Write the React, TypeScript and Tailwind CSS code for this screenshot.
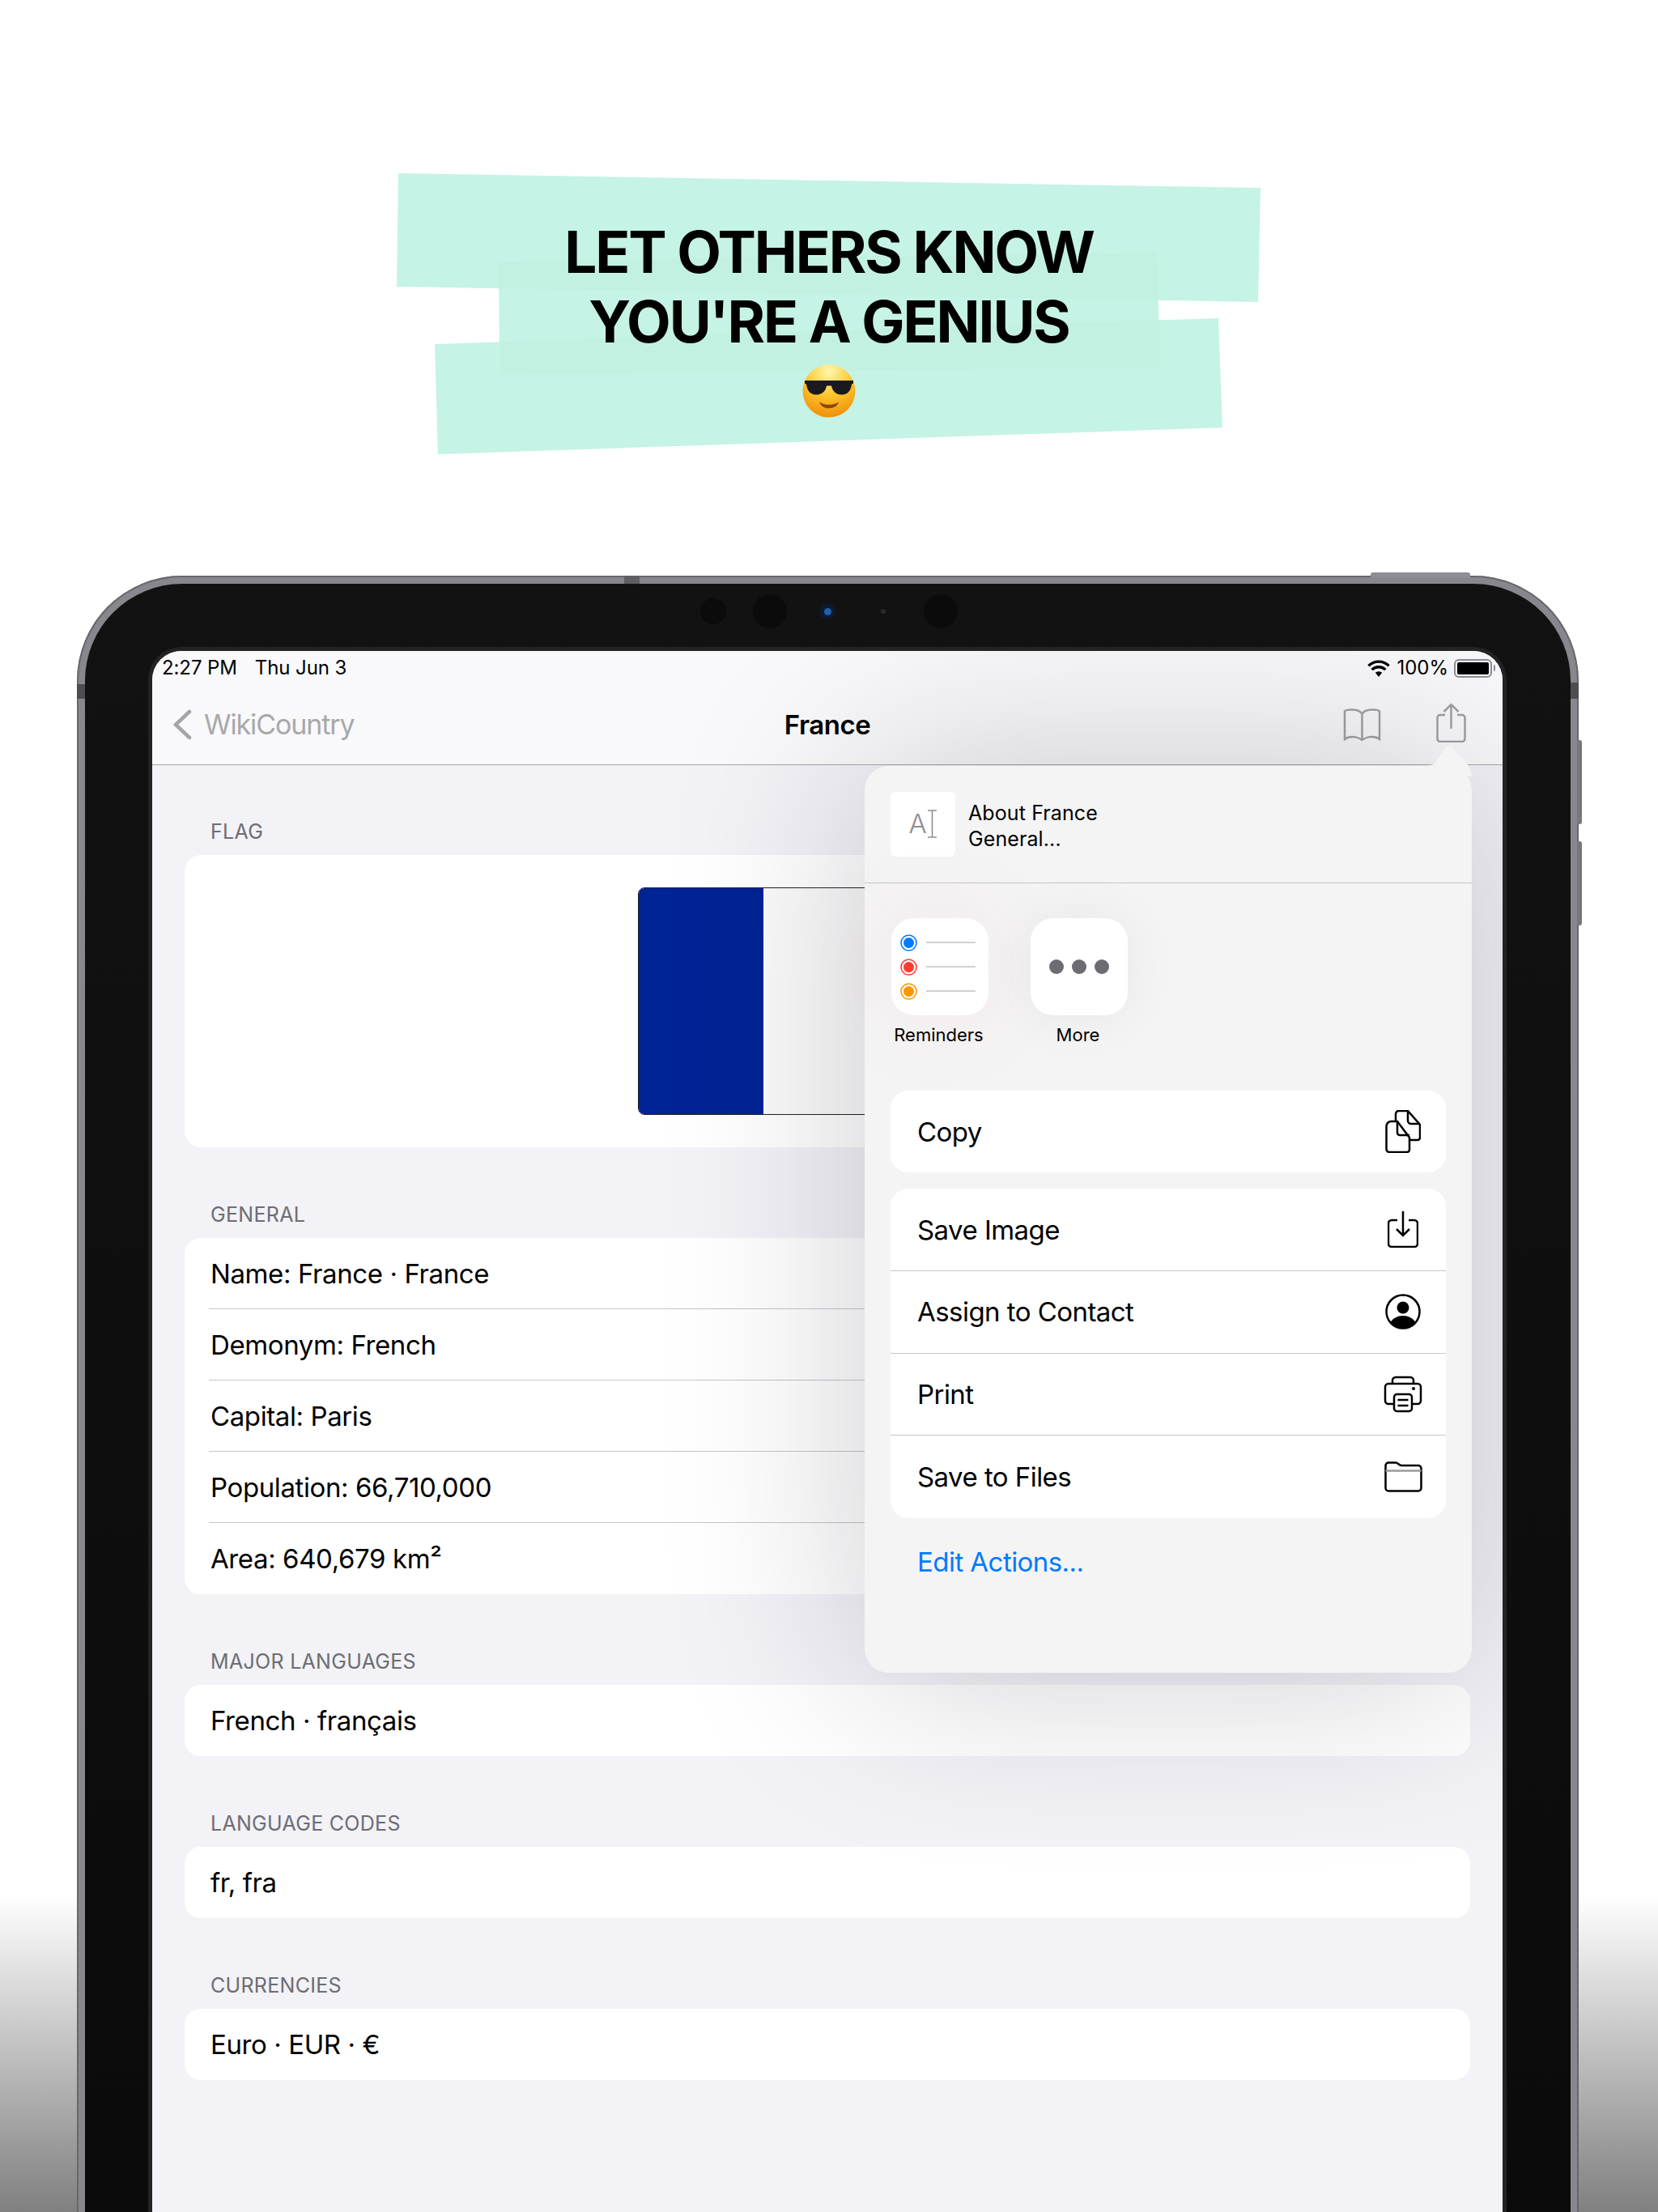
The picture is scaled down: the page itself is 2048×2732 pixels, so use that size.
import React from "react";

const font = { fontFamily: "Inter, 'Liberation Sans', sans-serif" };

const Tapes = () => (
  <svg className="absolute left-0 top-0" width="2048" height="600" viewBox="0 0 2048 600">
    <polygon points="492,214 1557,232 1554,373 490,354" fill="#c5f3e5" />
    <polygon points="537,425 1505,393 1510,528 541,561" fill="#c5f3e5" />
    <polygon points="616,323 1429,312 1433,453 617,463" fill="#c5f3e5" />
    {/* the strips overlap a little darker */}
    <polygon points="616,323 1429,312 1430,371 616,356" fill="#c2f1e2" />
    <polygon points="617,422 1432,395 1433,453 617,463" fill="#c2f1e2" />
  </svg>
);

const CoolEmoji = () => (
  <svg width="66" height="66" viewBox="0 0 66 66">
    <defs>
      <radialGradient id="face" cx="50%" cy="12%" r="92%">
        <stop offset="0%" stopColor="#fff8b0" />
        <stop offset="50%" stopColor="#fdc52c" />
        <stop offset="100%" stopColor="#ee8a08" />
      </radialGradient>
    </defs>
    <circle cx="33" cy="33" r="32.500" fill="url(#face)" />
    <path d="M3 20h60v3.500l-2 1c-1 8-5 13-12 13-8 0-12-5-13-11h-6c-1 6-5 11-13 11-7 0-11-5-12-13l-2-1z" fill="#1a1a1c" />
    <path d="M21 46c4 5 20 5 24 0-2 11-22 11-24 0z" fill="#8a4a0c" />
  </svg>
);

const Wifi = () => (
  <svg width="30" height="22" viewBox="0 0 28 21">
    <path d="M14 21l-4-5a6 6 0 0 1 8 0z" fill="#000" />
    <path d="M2 8a17 17 0 0 1 24 0M6 12.500a11.500 11.500 0 0 1 16 0" fill="none" stroke="#000" strokeWidth="3.200" />
  </svg>
);

const Book = () => (
  <svg className="mb-[2px]" width="47" height="40" viewBox="0 0 47 40" fill="none" stroke="#a0a0a3" strokeWidth="2.500">
    <path d="M23.500 7C21.500 3 17 1.500 11 1.500 6 1.500 3 2 2 3.500V38c5-4 15-4 21.500 1 6.500-5 16.500-5 21.500-1V3.500C44 2 41 1.500 36 1.500 30 1.500 25.500 3 23.500 7zM23.500 7v32" />
  </svg>
);

const Share = () => (
  <svg width="37" height="48" viewBox="0 0 37 48" fill="none" stroke="#a0a0a3" strokeWidth="2.500">
    <path d="M11 14H5a3.500 3.500 0 0 0-3.500 3.500v26A3.500 3.500 0 0 0 5 47h27a3.500 3.500 0 0 0 3.500-3.500v-26A3.500 3.500 0 0 0 32 14h-6" />
    <path d="M18.500 31V1M9.500 10l9-9 9 9" />
  </svg>
);

const CopyIcon = () => (
  <svg width="44" height="53" viewBox="0 0 44 53" fill="none" stroke="#000" strokeWidth="2.500">
    <path d="M13 14V5a4 4 0 0 1 4-4h11l15 17v16a3 3 0 0 1-3 3h-10" />
    <path d="M28 1v12a4 4 0 0 0 4 4h11" />
    <path d="M1.500 20a6 6 0 0 1 6-6H15l15 20v15a3 3 0 0 1-3 3H5a4 4 0 0 1-3.500-4z" fill="#fff" />
    <path d="M15 14v14a3 3 0 0 0 3 3h12" />
  </svg>
);

const SaveIcon = () => (
  <svg width="38" height="45" viewBox="0 0 38 45" fill="none" stroke="#000" strokeWidth="2.500">
    <path d="M12 11H5a4 4 0 0 0-4 4v25a4 4 0 0 0 4 4h28a4 4 0 0 0 4-4V15a4 4 0 0 0-4-4h-7" />
    <path d="M19 0v30M11 22l8 8 8-8" />
  </svg>
);

const ContactIcon = () => (
  <svg width="44" height="44" viewBox="0 0 44 44">
    <circle cx="22" cy="17" r="7.500" fill="#000" />
    <path d="M6 36c3-6 10-9 16-9s13 3 16 9c-4 5-10 7-16 7S10 41 6 36z" fill="#000" />
    <circle cx="22" cy="22" r="20.500" fill="none" stroke="#000" strokeWidth="2.500" />
  </svg>
);

const PrintIcon = () => (
  <svg width="48" height="46" viewBox="0 0 48 46" fill="none" stroke="#000" strokeWidth="2.500">
    <path d="M11 10V6a4 4 0 0 1 4-4h18a4 4 0 0 1 4 4v4" />
    <path d="M13 35H6a4 4 0 0 1-4-4V14a4 4 0 0 1 4-4h36a4 4 0 0 1 4 4v17a4 4 0 0 1-4 4h-7" />
    <rect x="13" y="23" width="22" height="21" rx="3.500" />
    <path d="M17.500 30h13M17.500 37h13" />
    <circle cx="37" cy="16" r="2" fill="#000" stroke="none" />
  </svg>
);

const FolderIcon = () => (
  <svg width="47" height="38" viewBox="0 0 47 38" fill="none" stroke="#000" strokeWidth="2.500">
    <path d="M1.500 5a3.500 3.500 0 0 1 3.500-3.500h9c3 0 4 3.500 7 3.500h21a3.500 3.500 0 0 1 3.500 3.500V33a3.500 3.500 0 0 1-3.500 3.500H5A3.500 3.500 0 0 1 1.500 33z" />
    <path d="M1.500 11.500h44" stroke="#9a9a9a" />
  </svg>
);

const ReminderDot = ({ color }: { color: string }) => (
  <svg width="21" height="21" viewBox="0 0 21 21">
    <circle cx="10.500" cy="10.500" r="9.500" fill="#fff" stroke={color} strokeWidth="1.600" />
    <circle cx="10.500" cy="10.500" r="6.500" fill={color} />
  </svg>
);

const SectionLabel = ({ children }: { children: React.ReactNode }) => (
  <div className="mb-[13px] h-[32px] pl-[32px] text-[25px] leading-[32px] tracking-[0.3px] text-[#6d6d72]">{children}</div>
);

const SingleRow = ({ label, text }: { label: string; text: string }) => (
  <section>
    <SectionLabel>{label}</SectionLabel>
    <div className="flex h-[88px] items-center rounded-[20px] bg-white pl-[32px] pt-[2px] text-[33px] tracking-[-0.4px] text-black">{text}</div>
  </section>
);

const generalRows = [
  "Name: France · France",
  "Demonym: French",
  "Capital: Paris",
  "Population: 66,710,000",
  "Area: 640,679 km²",
];

const actionRows = [
  { label: "Save Image", icon: <SaveIcon /> },
  { label: "Assign to Contact", icon: <ContactIcon /> },
  { label: "Print", icon: <PrintIcon /> },
  { label: "Save to Files", icon: <FolderIcon /> },
];

const Popover = () => (
  <div className="absolute left-[880px] top-[142px] h-[1120px] w-[750px] rounded-[30px] bg-[#f4f4f5] tracking-[-0.55px] shadow-[0_0_240px_rgba(25,25,40,0.22)]">
    {/* arrow up to the share button */}
    <svg className="absolute left-[696px] top-[-27px]" width="54" height="40" viewBox="0 0 54 40">
      <path d="M0 26c6 0 8-1 11-6L21 5c3-4 7-4 10 0l13 14c6 6 8 10 10 21H0z" fill="#f4f4f5" />
    </svg>

    <div className="flex h-[145px] items-start border-b border-[#c4c4c6] pl-[32px] pt-[32px]">
      <div className="flex h-[80px] w-[80px] items-center justify-center rounded-[6px] bg-white text-[33px] font-light tracking-normal text-[#8e8e93]">
        A
        <svg className="mb-[2px]" width="13" height="35" viewBox="0 0 13 35" fill="none" stroke="#8e8e93" strokeWidth="1.600">
          <path d="M1 1h11M1 34h11M6.500 1v33" />
        </svg>
      </div>
      <div className="ml-[16px] pt-[10px] text-[25px] leading-[32px] tracking-[0.1px] text-black">
        <div>About France</div>
        <div>General...</div>
      </div>
    </div>

    <div className="ml-[33px] mt-[43px] flex gap-[52px]">
      <div className="flex w-[120px] flex-col items-center">
        <div className="flex h-[120px] w-[120px] flex-col justify-center gap-[9px] rounded-[28px] bg-white pl-[11px] shadow-[0_0_110px_rgba(255,110,110,0.1)]">
          {["#007aff", "#ff3b30", "#ff9500"].map((c) => (
            <div key={c} className="flex items-center gap-[11px]">
              <ReminderDot color={c} />
              <div className="h-[2px] w-[61px] bg-[#d1d1d6]" />
            </div>
          ))}
        </div>
        <div className="ml-[-3px] mt-[10px] whitespace-nowrap text-[22px] leading-[28px] tracking-normal text-black">Reminders</div>
      </div>
      <div className="flex w-[120px] flex-col items-center">
        <div className="flex h-[120px] w-[120px] items-center justify-center gap-[10px] rounded-[28px] bg-white shadow-[0_0_70px_rgba(0,0,0,0.06)]">
          <div className="h-[18px] w-[18px] rounded-full bg-[#6c6c72]" />
          <div className="h-[18px] w-[18px] rounded-full bg-[#6c6c72]" />
          <div className="h-[18px] w-[18px] rounded-full bg-[#6c6c72]" />
        </div>
        <div className="ml-[-3px] mt-[10px] text-[22px] leading-[28px] tracking-normal text-black">More</div>
      </div>
    </div>

    <div className="mx-[32px] mt-[55px] flex h-[101px] items-center justify-between rounded-[22px] bg-white pl-[33px] pr-[31px] text-[33px] text-black">
      <span className="pt-[2px]">Copy</span>
      <CopyIcon />
    </div>

    <div className="mx-[32px] mt-[20px] grid h-[407px] grid-rows-4 divide-y divide-[#c6c6c8] rounded-[22px] bg-white text-[33px] text-black">
      {actionRows.map((row) => (
        <div key={row.label} className="flex items-center justify-between pl-[33px] pr-[29px]">
          <span className="pt-[2px]">{row.label}</span>
          <div className="flex w-[48px] justify-center">{row.icon}</div>
        </div>
      ))}
    </div>

    <div className="ml-[65px] mt-[33px] text-[33px] leading-[42px] text-[#007aff]">Edit Actions...</div>
  </div>
);

const App: React.FC = () => {
  return (
    <div
      className="relative h-[2732px] w-[2048px] overflow-hidden bg-[linear-gradient(to_bottom,#ffffff_2340px,#808080_2732px)]"
      style={font}
    >
      {/* Headline */}
      <div className="relative h-[711px] pt-[268px]">
        <Tapes />
        <h1 className="relative flex flex-col items-center text-[71px] font-bold leading-[86px] tracking-[-2.1px] text-black">
          <span>LET OTHERS KNOW</span>
          <span>YOU'RE A GENIUS</span>
          <span className="mt-[10px] flex h-[66px] items-center"><CoolEmoji /></span>
        </h1>
      </div>

      {/* iPad */}
      <div className="relative ml-[95px] h-[2200px] w-[1855px] rounded-[130px] bg-[#87878d] p-[10px] shadow-[inset_0_0_0_2px_#67676c]">
        {/* hardware bits on the frame */}
        <div className="absolute left-[1598px] top-[-4px] h-[6px] w-[123px] rounded-t-[3px] bg-[#8d8d92]" />
        <div className="absolute left-[676px] top-0 h-[11px] w-[19px] bg-[#5f5f63]" />
        <div className="absolute right-[-4px] top-[203px] h-[104px] w-[6px] rounded-r-[3px] bg-[#77777c]" />
        <div className="absolute right-[-4px] top-[328px] h-[104px] w-[6px] rounded-r-[3px] bg-[#77777c]" />
        <div className="absolute left-0 top-[134px] h-[18px] w-[10px] bg-[#4e4e52]" />
        <div className="absolute right-0 top-[132px] h-[20px] w-[10px] bg-[#4e4e52]" />

        <div className="relative h-full rounded-[120px] bg-[linear-gradient(to_bottom,#121212,#0a0a0a)] pl-[83px] pr-[84px] pt-[83px]">
          {/* camera row */}
          <div className="absolute left-[760px] top-[13px] flex h-[42px] items-center">
            <div className="h-[32px] w-[32px] rounded-full bg-[#0b0b0b]" />
            <div className="ml-[33px] h-[42px] w-[42px] rounded-full bg-[#0b0b0b]" />
            <div className="ml-[40px] flex h-[20px] w-[20px] items-center justify-center rounded-full bg-[#0d1a2e]">
              <div className="h-[9px] w-[9px] rounded-full bg-[#1f5fae]" />
            </div>
            <div className="ml-[56px] h-[6px] w-[6px] rounded-full bg-[#2a2a2a]" />
            <div className="ml-[47px] h-[42px] w-[42px] rounded-full bg-[#0b0b0b]" />
          </div>

          <div className="relative h-full overflow-hidden rounded-t-[36px] bg-[#f2f2f7] shadow-[0_0_0_5px_#232323]">
            <header className="h-[141px] border-b border-[#a6a6aa] bg-[#f9f9fb]">
              <div className="flex h-[41px] items-center justify-between pl-[12px] pr-[9px] pt-[1px] text-[24px] tracking-[-0.1px] text-black">
                <div className="flex gap-[22px]">
                  <span>2:27 PM</span>
                  <span>Thu Jun 3</span>
                </div>
                <div className="flex items-center gap-[7px]">
                  <Wifi />
                  <span className="tracking-normal">100%</span>
                  <div className="flex items-center gap-[2px]">
                    <div className="h-[23px] w-[47px] rounded-[6px] border-2 border-[#8e8e93] p-[2px]">
                      <div className="h-full rounded-[2px] bg-black" />
                    </div>
                    <div className="h-[8px] w-[2px] rounded-r bg-[#8e8e93]" />
                  </div>
                </div>
              </div>
              <div className="grid h-[99px] grid-cols-[1fr_auto_1fr] items-center">
                <div className="flex items-center gap-[15px] pl-[25px] text-[34px] tracking-[-1.1px] text-[#a8a8ab]">
                  <svg width="24" height="38" viewBox="0 0 24 38" fill="none" stroke="#a5a5a8" strokeWidth="4.500" strokeLinecap="round">
                    <path d="M21 3L4 19l17 16" />
                  </svg>
                  WikiCountry
                </div>
                <div className="pt-[2px] text-[33px] font-semibold tracking-[-0.5px] text-black">France</div>
                <div className="flex items-end justify-end gap-[68px] pb-[4px] pr-[45px]">
                  <Book />
                  <Share />
                </div>
              </div>
            </header>

            <main className="flex flex-col gap-[67px] px-[40px] pt-[66px]">
              <section>
                <SectionLabel>FLAG</SectionLabel>
                <div className="flex h-[361px] items-center justify-center rounded-[20px] bg-white">
                  <div className="ml-[-3px] flex h-[281px] w-[465px] overflow-hidden rounded-[8px] border border-[#222]">
                    <div className="w-1/3 bg-[#002395]" />
                    <div className="w-1/3 bg-[#fbfbfb]" />
                    <div className="w-1/3 bg-[#ed2939]" />
                  </div>
                </div>
              </section>

              <section>
                <SectionLabel>GENERAL</SectionLabel>
                <div className="overflow-hidden rounded-[20px] bg-white text-[33px] tracking-[-0.4px] text-black">
                  {generalRows.map((row, i) => (
                    <div key={row} className="pl-[30px]">
                      <div className={`flex h-[88px] items-center pl-[2px] pt-[2px] ${i < generalRows.length - 1 ? "border-b border-[#c6c6c8]" : ""}`}>
                        {row}
                      </div>
                    </div>
                  ))}
                </div>
              </section>

              <SingleRow label="MAJOR LANGUAGES" text="French · français" />
              <SingleRow label="LANGUAGE CODES" text="fr, fra" />
              <SingleRow label="CURRENCIES" text="Euro · EUR · €" />
            </main>

            <Popover />
          </div>
        </div>
      </div>
    </div>
  );
};

export default App;
